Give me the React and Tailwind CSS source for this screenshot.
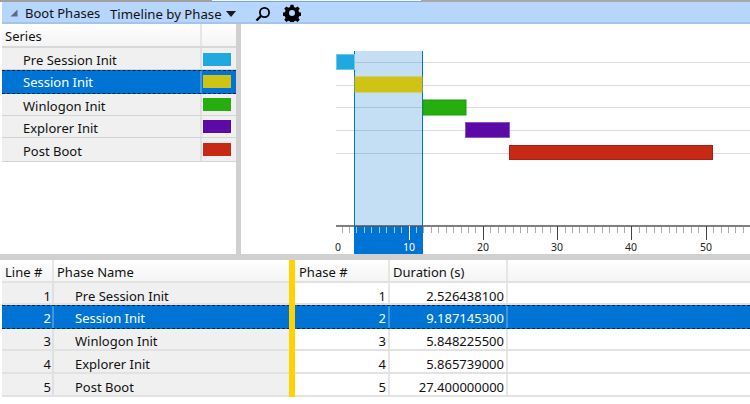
const phases = [
  { name: 'Pre Session Init', color: '#1fa9e0', duration: '2.526438100' },
  { name: 'Session Init', color: '#cfc415', duration: '9.187145300' },
  { name: 'Winlogon Init', color: '#25ae0d', duration: '5.848225500' },
  { name: 'Explorer Init', color: '#5b0aa5', duration: '5.865739000' },
  { name: 'Post Boot', color: '#c72a14', duration: '27.400000000' },
];

// the rows in the capture are not all the same height
const seriesRows = [
  { row: 'h-[22px]', text: 'leading-[25px]', swatch: 'mt-[5px]' },
  { row: 'h-[24px]', text: 'leading-[22px]', swatch: 'mt-[4px]' },
  { row: 'h-[22px]', text: 'leading-[25px]', swatch: 'mt-[4px]' },
  { row: 'h-[22px]', text: 'leading-[25px]', swatch: 'mt-[4px]' },
  { row: 'h-[24px]', text: 'leading-[27px]', swatch: 'mt-[5px]' },
];

const tableRows = [
  { row: 'h-[22px]', text: 'leading-[26px]' },
  { row: 'h-[24px]', text: 'leading-[24px]' },
  { row: 'h-[22px]', text: 'leading-[24px]' },
  { row: 'h-[23px]', text: 'leading-[26px]' },
  { row: 'h-[23px]', text: 'leading-[26px]' },
];

const selectedRow = 'bg-[#0074d4] text-white border-y border-dashed border-[#06284f]';
const plainRow = 'bg-[#f0f0f0] text-[#111] border-b border-[#d4d4d4]';

const bars = [
  { x: 336.5, y: 54.5, w: 18, h: 15, fill: '#1fa9e0', stroke: '#6cc8ec' },
  { x: 355, y: 77, w: 67, h: 15, fill: '#cfc415', stroke: '#cfc415' },
  { x: 423, y: 100, w: 43, h: 15, fill: '#25ae0d', stroke: '#1b9c0a' },
  { x: 465.5, y: 122.5, w: 44, h: 15, fill: '#5b0aa5', stroke: '#8a55c4' },
  { x: 509.5, y: 145.5, w: 203, h: 14, fill: '#c72a14', stroke: '#b01b0a' },
];

const gridLines = [62, 85, 107, 130, 153];

function Chart() {
  const ticks = [];
  for (let i = 1; i < 56; i++) ticks.push(i);
  const tickX = (i) => Math.round(334.2 + i * 7.43) + 0.5;

  return (
    <svg viewBox="241 24 509 230" className="block w-[509px] h-[230px] bg-white">
      {gridLines.map((y) => (
        <line key={y} x1="336" x2="750" y1={y + 0.5} y2={y + 0.5} stroke="#dcdcdc" />
      ))}
      <rect x="354" y="51" width="69" height="175" fill="#0a78d2" fillOpacity="0.24" />
      <rect x="354" y="226" width="69" height="28" fill="#0074d4" />
      <line x1="354.5" x2="354.5" y1="51" y2="226" stroke="#0074d4" />
      <line x1="422.5" x2="422.5" y1="51" y2="226" stroke="#0074d4" />
      {bars.map((b) => (
        <rect key={b.x} x={b.x} y={b.y} width={b.w} height={b.h} fill={b.fill} stroke={b.stroke} />
      ))}
      <line x1="336" x2="750" y1="226" y2="226" stroke="#555" strokeWidth="1.4" />
      {ticks.map((i) => {
        const x = tickX(i);
        const inside = x > 354 && x < 423;
        if (i % 10 === 0) {
          return <line key={i} x1={x} x2={x} y1="226" y2="240" stroke={inside ? '#fff' : '#444'} />;
        }
        return <line key={i} x1={x} x2={x} y1="227" y2="233" stroke={inside ? '#9cc8ee' : '#aaa'} />;
      })}
      <g fontFamily="'Noto Sans', sans-serif" fontSize="10.5" textAnchor="middle" fill="#222">
        <text x="338" y="251">0</text>
        <text x="409" y="251" fill="#fff">10</text>
        <text x="483" y="251">20</text>
        <text x="557" y="251">30</text>
        <text x="631" y="251">40</text>
        <text x="706" y="251">50</text>
      </g>
    </svg>
  );
}

function SeriesList() {
  return (
    <div className="w-[234px] ml-[2px] shrink-0 bg-white">
      <div className="h-[24px] flex border-b-2 border-[#d8d8d8] bg-gradient-to-b from-white to-[#f4f4f4]">
        <div className="w-[198px] pl-[3px] leading-[25px]">Series</div>
        <div className="flex-1 border-l-2 border-[#e6e6e6]" />
      </div>
      {phases.map((p, i) => (
        <div key={p.name} className={`${seriesRows[i].row} flex ${i === 1 ? selectedRow : plainRow}`}>
          <div className={`w-[198px] pl-[21px] ${seriesRows[i].text}`}>{p.name}</div>
          <div className={`border-l-2 pl-[1px] ${i === 1 ? 'border-[#3f95dc]' : 'border-[#e0e0e0]'}`}>
            <div className={`w-[28px] h-[13px] ${seriesRows[i].swatch}`} style={{ backgroundColor: p.color }} />
          </div>
        </div>
      ))}
    </div>
  );
}

function PhaseTable() {
  return (
    <div className="relative flex-1 bg-white pl-[2px]">
      <div className="h-[23px] flex border-b-2 border-[#e2e2e2] bg-gradient-to-b from-white to-[#f4f4f4]">
        <div className="w-[52px] pl-[3px] border-r-2 border-[#e6e6e6] leading-[24px]">Line #</div>
        <div className="w-[241px] pl-[3px] leading-[24px]">Phase Name</div>
        <div className="w-[95px] pl-[4px] border-r-2 border-[#e6e6e6] leading-[24px]">Phase #</div>
        <div className="w-[118px] pl-[3px] border-r-2 border-[#e6e6e6] leading-[24px]">Duration (s)</div>
      </div>
      {phases.map((p, i) => {
        const selected = i === 1;
        const { row, text } = tableRows[i];
        return (
          <div key={p.name} className={`${row} flex ${selected ? selectedRow : 'text-[#111] border-b-2 border-[#e2e2e2]'}`}>
            <div className={`w-[52px] pr-[1px] text-right border-r-2 ${text} ${selected ? 'border-[#3f95dc]' : 'bg-[#f0f0f0] border-[#e0e0e0]'}`}>{i + 1}</div>
            <div className={`w-[241px] pl-[21px] ${text} ${selected ? '' : 'bg-[#f0f0f0]'}`}>{p.name}</div>
            <div className={`w-[95px] pr-[2px] text-right border-r-2 ${text} ${selected ? 'border-[#3f95dc]' : 'border-[#e6e6e6]'}`}>{i + 1}</div>
            <div className={`w-[118px] pr-[2px] text-right border-r-2 ${text} ${selected ? 'border-[#3f95dc]' : 'border-[#e6e6e6]'}`}>{p.duration}</div>
          </div>
        );
      })}
      {/* frozen column marker sits over the rows */}
      <div className="absolute left-[289px] top-0 w-[6px] h-[137px] bg-[#ffd200]" />
    </div>
  );
}

export default function App() {
  return (
    <div className="w-[750px] h-[404px] overflow-hidden flex flex-col bg-white text-[13px] text-[#111] font-['Noto_Sans',sans-serif]">
      <div className="h-[2px] shrink-0 flex">
        <div className="w-[212px] bg-[#a0a0a0]" />
        <div className="w-[209px] bg-[#f8f8f8] border-b border-[#7ba4d8]" />
        <div className="flex-1 bg-[#a8a8a8]" />
      </div>
      <div className="h-[22px] shrink-0 ml-[2px] flex items-center bg-[#b6d6fe] border-b-2 border-[#a5c4ec] pl-[8px]">
        <svg width="8" height="8" viewBox="0 0 8 8" className="mr-[7px] mt-[1px]">
          <path d="M7.500 .5 L7.500 7.500 L.5 7.500 Z" fill="#5f6b78" />
        </svg>
        <span className="w-[85px] pt-[3px]">Boot Phases</span>
        <span className="w-[116px] pt-[6px] text-[13.2px]">Timeline by Phase</span>
        <svg width="10" height="6" viewBox="0 0 10 6" className="mt-[3px]">
          <path d="M0 0 H10 L5 6 Z" fill="#1a1a1a" />
        </svg>
        <svg width="16" height="16" viewBox="0 0 16 16" className="ml-[19px] mt-[3px]">
          <circle cx="9.5" cy="6.500" r="4.6" fill="none" stroke="#000" strokeWidth="1.8" />
          <line x1="6" y1="10" x2="1.500" y2="14.500" stroke="#000" strokeWidth="2.4" />
        </svg>
        <svg width="18" height="18" viewBox="0 0 24 24" className="ml-[12px] mt-[1px]">
          <path
            fill="#000"
            fillRule="evenodd"
            d="M10 1h4l.6 3 2.300 1 2.600-1.700 2.800 2.800-1.700 2.600 1 2.300 3 .6v4l-3 .6-1 2.300 1.700 2.600-2.800 2.800-2.600-1.700-2.300 1-.6 3h-4l-.6-3-2.300-1-2.600 1.700-2.800-2.800 1.700-2.600-1-2.300-3-.6v-4l3-.6 1-2.300-1.700-2.600 2.800-2.800 2.600 1.700 2.300-1zM12 8a4 4 0 1 0 0 8 4 4 0 0 0 0-8z"
          />
        </svg>
      </div>
      <div className="h-[230px] shrink-0 flex overflow-hidden">
        <SeriesList />
        <div className="w-[5px] shrink-0 bg-[#d0d0d0]" />
        <Chart />
      </div>
      <div className="h-[6px] shrink-0 bg-[#d0d0d0]" />
      <PhaseTable />
    </div>
  );
}
